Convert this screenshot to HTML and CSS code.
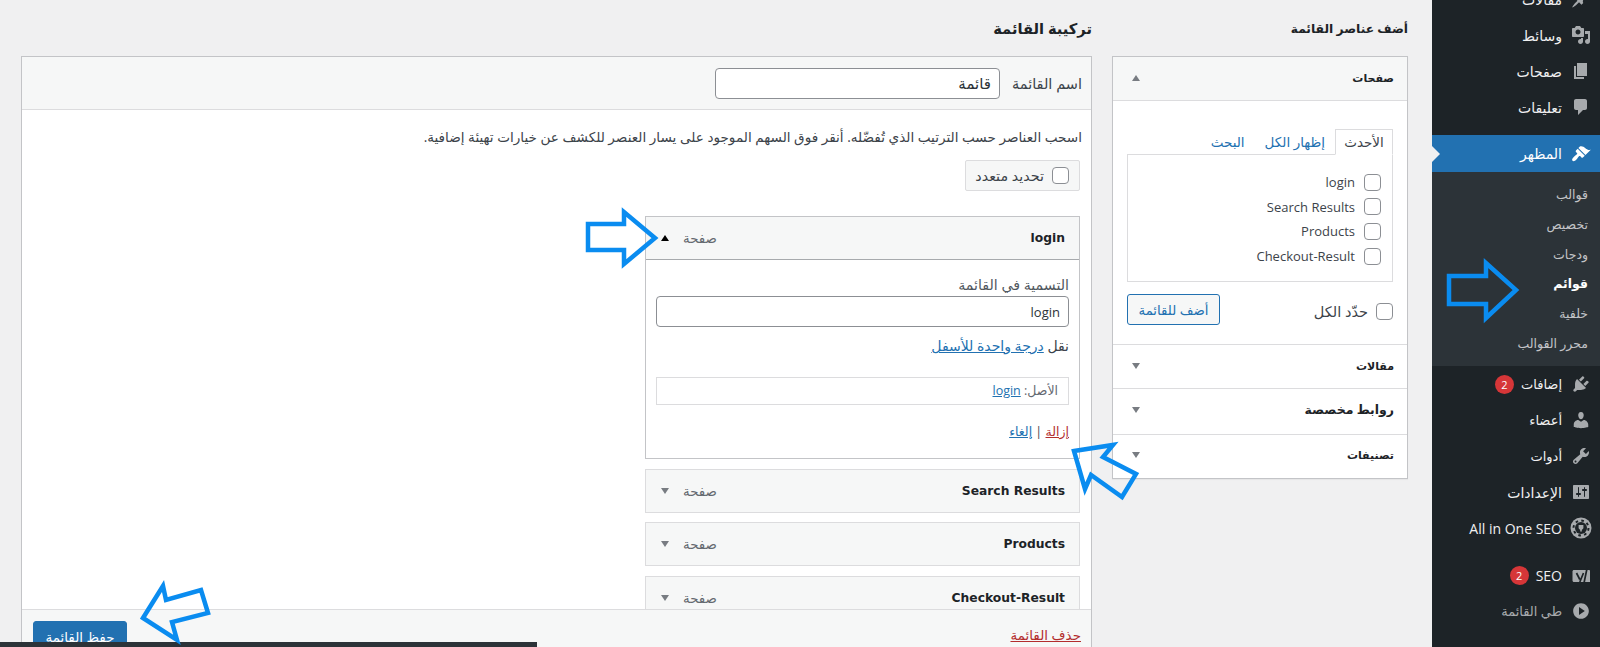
FILE: index.html
```html
<!DOCTYPE html>
<html lang="ar" dir="rtl">
<head>
  <meta charset="UTF-8">
  <meta name="viewport" content="width=device-width, initial-scale=1.0">
  <title>القوائم</title>
  <link rel="stylesheet" href="styles.css">
</head>
<body>
  <div class="page">
    <nav class="sidebar">
      <a class="nav-item"><svg class="nav-icon" viewBox="0 0 20 20"><path d="M10.44 3.02l1.82-1.82 6.36 6.35-1.83 1.82c-1.05-.68-2.48-.57-3.41.36l-.75.75c-.92.93-1.04 2.35-.35 3.41l-1.83 1.82-2.41-2.41-2.8 2.79c-.42.42-3.38 2.71-3.8 2.29s1.86-3.39 2.28-3.81l2.79-2.79L4.1 9.36l1.83-1.82c1.05.69 2.48.57 3.4-.36l.75-.75c.93-.92 1.05-2.35.36-3.41z"/></svg><span>مقالات</span></a>
      <a class="nav-item"><svg class="nav-icon" viewBox="0 0 20 20"><path d="M13 11V4c0-.55-.45-1-1-1h-1.67L9 1H5L3.67 3H2c-.55 0-1 .45-1 1v7c0 .55.45 1 1 1h10c.55 0 1-.45 1-1zM7 4.5c1.38 0 2.5 1.12 2.5 2.5S8.38 9.5 7 9.5 4.5 8.38 4.5 7 5.62 4.5 7 4.5zM14 6h5v10.5c0 1.38-1.12 2.5-2.5 2.5S14 17.88 14 16.5s1.12-2.5 2.5-2.5c.17 0 .34.02.5.05V9h-3V6zm-4 8.05V13h2v3.5c0 1.38-1.12 2.5-2.5 2.5S7 17.88 7 16.5 8.12 14 9.5 14c.17 0 .34.02.5.05z"/></svg><span>وسائط</span></a>
      <a class="nav-item"><svg class="nav-icon" viewBox="0 0 20 20"><path d="M6 15V2h10v13H6zm-1 1h8v2H3V5h2v11z"/></svg><span>صفحات</span></a>
      <a class="nav-item"><svg class="nav-icon" viewBox="0 0 20 20"><path d="M5 2h9c1.1 0 2 .9 2 2v7c0 1.1-.9 2-2 2h-2l-5 5v-5H5c-1.1 0-2-.9-2-2V4c0-1.1.9-2 2-2z"/></svg><span>تعليقات</span></a>
      <a class="nav-item nav-current"><svg class="nav-icon" viewBox="0 0 20 20"><path d="M14.48 11.06L7.41 3.99l1.5-1.5c.5-.56 2.3-.47 3.51.32 1.21.8 1.43 1.28 2.91 2.1 1.18.64 2.45 1.26 4.45.85zm-.71.71L6.7 4.7 4.93 6.47c-.39.39-.39 1.02 0 1.41l1.06 1.06c.39.39.39 1.03 0 1.42-.6.6-1.43 1.11-2.21 1.69-.35.26-.7.53-1.01.84-1.34 1.34-2.28 2.9-1.25 3.93 1.03 1.03 2.59.09 3.93-1.25.31-.31.58-.66.84-1.01.58-.78 1.09-1.61 1.69-2.21.39-.39 1.03-.39 1.42 0l1.06 1.06c.39.39 1.02.39 1.41 0z"/></svg><span>المظهر</span></a>
      <div class="submenu">
        <a>قوالب</a>
        <a>تخصيص</a>
        <a>ودجات</a>
        <a class="sub-current">قوائم</a>
        <a>خلفية</a>
        <a>محرر القوالب</a>
      </div>
      <a class="nav-item nav-tight"><svg class="nav-icon" viewBox="0 0 20 20"><path d="M13.11 4.36L9.87 7.6 8 5.73l3.24-3.24c.35-.34 1.05-.2 1.56.32.52.51.66 1.21.31 1.55zm-8 1.77l.91-1.12 9.01 9.01-1.19.84c-.71.71-2.63 1.16-3.82 1.16H6.14L4.9 17.26c-.59.59-1.54.59-2.12 0-.59-.58-.59-1.53 0-2.12l1.24-1.24v-3.88c0-1.13.4-3.19 1.09-3.89zm7.26 3.97l3.24-3.24c.34-.35 1.04-.21 1.55.31.52.51.66 1.21.31 1.55l-3.24 3.25z"/></svg><span>إضافات</span><b class="badge">2</b></a>
      <a class="nav-item nav-tight"><svg class="nav-icon" viewBox="0 0 20 20"><path d="M10 9.25c-2.27 0-2.73-3.44-2.73-3.44C7 4.02 7.82 2 9.97 2c2.16 0 2.98 2.02 2.71 3.81 0 0-.41 3.44-2.68 3.44zm0 2.57L12.72 10c2.39 0 4.52 2.33 4.52 4.53v2.49s-3.65 1.13-7.24 1.13c-3.65 0-7.24-1.13-7.24-1.13v-2.49c0-2.25 1.94-4.48 4.47-4.48z"/></svg><span>أعضاء</span></a>
      <a class="nav-item nav-tight"><svg class="nav-icon" viewBox="0 0 20 20"><path d="M16.68 9.77c-1.34 1.34-3.3 1.67-4.95.99l-5.41 6.52c-.99.99-2.59.99-3.58 0s-.99-2.59 0-3.57l6.52-5.42c-.68-1.65-.35-3.61.99-4.95 1.28-1.28 3.12-1.62 4.72-1.06l-2.89 2.89 2.82 2.82 2.86-2.87c.53 1.58.18 3.39-1.08 4.65zM3.81 16.21c.4.39 1.04.39 1.43 0 .4-.4.4-1.04 0-1.43-.39-.4-1.03-.4-1.43 0-.39.39-.39 1.03 0 1.43z"/></svg><span>أدوات</span></a>
      <a class="nav-item"><svg class="nav-icon" viewBox="0 0 20 20"><path d="M18 16V4c0-.55-.45-1-1-1H3c-.55 0-1 .45-1 1v12c0 .55.45 1 1 1h14c.55 0 1-.45 1-1zM8 11h1c.55 0 1 .45 1 1s-.45 1-1 1H8v1.5c0 .28-.22.5-.5.5s-.5-.22-.5-.5V13H6c-.55 0-1-.45-1-1s.45-1 1-1h1V5.5c0-.28.22-.5.5-.5s.5.22.5.5V11zm5-2h-1c-.55 0-1-.45-1-1s.45-1 1-1h1V5.5c0-.28.22-.5.5-.5s.5.22.5.5V7h1c.55 0 1 .45 1 1s-.45 1-1 1h-1v5.5c0 .28-.22.5-.5.5s-.5-.22-.5-.5V9z"/></svg><span>الإعدادات</span></a>
      <a class="nav-item"><svg class="nav-icon icon-large" viewBox="0 0 22 22"><circle cx="11" cy="11" r="10.5"/><circle cx="11" cy="11" r="6" fill="#1d2327"/><circle cx="11" cy="11" r="7.5" fill="none" stroke="#1d2327" stroke-width="2" stroke-dasharray="2.6 3.3"/><path d="M8.6 8h4.8v3.2L11.800 13v1.600h-1.600V13L8.600 11.200z"/></svg><span class="nav-latin">All in One SEO</span></a>
      <a class="nav-item nav-seo"><svg class="nav-icon" viewBox="0 0 20 20"><path d="M3 5h15c.4 0 1 .4 1 1v11H3c-.9 0-1.500-.6-1.500-1.500v-9C1.500 5.600 2.100 5 3 5z"/><path d="M5.500 8l3.300 6.500M12.500 8l-3.700 9M16.500 1l-3.500 17" stroke="#1d2327" stroke-width="1.700" fill="none"/></svg><span class="nav-latin">SEO</span><b class="badge">2</b></a>
      <a class="nav-item nav-collapse"><svg class="nav-icon flip" viewBox="0 0 20 20"><path d="M10 2.160c4.330 0 7.840 3.510 7.840 7.840s-3.510 7.840-7.840 7.840S2.160 14.330 2.160 10 5.710 2.160 10 2.160zm2 11.720V6.120L6.180 9.970z"/></svg><span>طي القائمة</span></a>
    </nav>

    <main class="content">
      <section class="add-col">
        <h2 class="col-title">أضف عناصر القائمة</h2>
        <div class="accordion">
          <div class="acc-head acc-open"><span>صفحات</span><i class="tri tri-up"></i></div>
          <div class="acc-body">
            <div class="tabs">
              <span class="tab tab-active">الأحدث</span>
              <a class="tab">إظهار الكل</a>
              <a class="tab">البحث</a>
            </div>
            <div class="tab-panel">
              <label class="check-row"><input type="checkbox"><span>login</span></label>
              <label class="check-row"><input type="checkbox"><span>Search Results</span></label>
              <label class="check-row"><input type="checkbox"><span>Products</span></label>
              <label class="check-row"><input type="checkbox"><span>Checkout-Result</span></label>
            </div>
            <div class="add-actions">
              <label class="select-all"><input type="checkbox"><span>حدّد الكل</span></label>
              <button class="btn-secondary">أضف للقائمة</button>
            </div>
          </div>
          <div class="acc-head"><span>مقالات</span><i class="tri"></i></div>
          <div class="acc-head acc-tall"><span>روابط مخصصة</span><i class="tri"></i></div>
          <div class="acc-head acc-last"><span>تصنيفات</span><i class="tri"></i></div>
        </div>
      </section>

      <section class="menu-col">
        <h2 class="col-title title-large">تركيبة القائمة</h2>
        <div class="menu-box">
          <div class="menu-header">
            <label class="name-label">اسم القائمة</label>
            <input class="text-input name-input" type="text" value="قائمة">
          </div>
          <div class="menu-body">
            <p class="hint">اسحب العناصر حسب الترتيب الذي تُفضّله. أنقر فوق السهم الموجود على يسار العنصر للكشف عن خيارات تهيئة إضافية.</p>
            <label class="bulk"><input type="checkbox"><span>تحديد متعدد</span></label>

            <div class="item item-open">
              <div class="item-head"><span class="item-title">login</span><span class="item-type">صفحة</span><i class="tri tri-up tri-dark"></i></div>
              <div class="item-body">
                <div class="field-label">التسمية في القائمة</div>
                <input class="text-input item-input" type="text" value="login" dir="rtl">
                <div class="move-row">نقل <a>درجة واحدة للأسفل</a></div>
                <div class="origin">الأصل: <a>login</a></div>
                <div class="item-links"><a class="danger">إزالة</a> | <a>إلغاء</a></div>
              </div>
            </div>
            <div class="item">
              <div class="item-head"><span class="item-title">Search Results</span><span class="item-type">صفحة</span><i class="tri"></i></div>
            </div>
            <div class="item">
              <div class="item-head"><span class="item-title">Products</span><span class="item-type">صفحة</span><i class="tri"></i></div>
            </div>
            <div class="item">
              <div class="item-head"><span class="item-title">Checkout-Result</span><span class="item-type">صفحة</span><i class="tri"></i></div>
            </div>
          </div>
          <div class="menu-footer">
            <a class="danger">حذف القائمة</a>
            <button class="btn-primary">حفظ القائمة</button>
          </div>
        </div>
      </section>
    </main>

    <div class="bottom-bar"></div>

    <!-- annotation arrows drawn on top of the screenshot -->
    <svg class="arrows" viewBox="0 0 1600 647">
      <path d="M588 224H624V212L655 238L624 264V250H588Z"/>
      <path d="M1449 276H1486V263L1516 290L1486 318V304H1449Z"/>
      <path d="M1074 451L1113 445L1103 457L1136 474L1122 497L1091 475L1085 489Z"/>
      <path d="M143 618L163 586L166 600L201 590L208 613L172 622L177 640Z"/>
    </svg>
  </div>
</body>
</html>
```

FILE: styles.css
```css
* {
  box-sizing: border-box;
}
html, body {
  margin: 0;
  padding: 0;
  height: 100%;
  overflow: hidden;
}
body {
  font-family: "Open Sans", "DejaVu Sans", sans-serif;
  font-size: 13.5px;
  color: #3c434a;
  background: #f0f0f1;
}
a {
  color: #2271b1;
  text-decoration: none;
}
p {
  margin: 0;
}
.page {
  position: relative;
  display: flex;
  width: 1600px;
  height: 647px;
  overflow: hidden;
}

/* sidebar */
.sidebar {
  width: 168px;
  flex-shrink: 0;
  height: 700px;
  margin-top: -19px;
  background: #1d2327;
  color: #f0f0f1;
}
.nav-item {
  display: flex;
  align-items: center;
  gap: 9px;
  height: 36px;
  padding-right: 9px;
  font-size: 14px;
  color: #f0f0f1;
}
.nav-tight {
  font-size: 13px;
}
.nav-icon {
  width: 20px;
  height: 20px;
  flex-shrink: 0;
  fill: #a7aaad;
}
.icon-large {
  width: 22px;
  height: 22px;
  margin-left: -1px;
  margin-right: -1px;
}
.flip {
  transform: scaleX(-1);
}
.nav-latin {
  font-family: "Open Sans", sans-serif;
  font-size: 14px;
}
.nav-current {
  position: relative;
  height: 37px;
  margin-top: 10px;
  background: #2271b1;
  color: #fff;
}
.nav-current .nav-icon {
  fill: #fff;
}
.nav-current::after {
  content: "";
  position: absolute;
  left: 0;
  top: 11px;
  border-top: 8px solid transparent;
  border-bottom: 8px solid transparent;
  border-left: 8px solid #f0f0f1;
}
.submenu {
  display: flex;
  flex-direction: column;
  height: 194px;
  padding: 8px 0 6px;
  background: #2c3338;
  font-size: 12.5px;
}
.submenu a {
  height: 29.8px;
  line-height: 30px;
  padding-right: 12px;
  color: #c3c4c7;
}
.submenu .sub-current {
  color: #fff;
  font-weight: bold;
}
.badge {
  width: 19px;
  height: 19px;
  margin-right: -2px;
  border-radius: 50%;
  background: #d63638;
  color: #fff;
  font-family: "Open Sans", sans-serif;
  font-size: 11px;
  font-weight: 400;
  line-height: 19px;
  text-align: center;
}
.nav-seo {
  margin-top: 11px;
}
.nav-collapse span {
  font-size: 13px;
  color: #a7aaad;
}

/* content columns */
.content {
  flex: 1;
  display: flex;
  gap: 20px;
  padding-right: 24px;
  padding-left: 21px;
}
.add-col {
  width: 296px;
  flex-shrink: 0;
}
.menu-col {
  flex: 1;
}
.col-title {
  margin: 0;
  height: 56px;
  line-height: 57px;
  font-size: 12.3px;
  font-weight: 600;
  color: #1d2327;
}
.title-large {
  font-size: 14.7px;
}

/* left accordion */
.accordion {
  background: #fff;
  border: 1px solid #c3c4c7;
  box-shadow: 0 1px 1px rgba(0, 0, 0, .04);
}
.acc-head {
  display: flex;
  align-items: center;
  justify-content: space-between;
  height: 44px;
  padding: 0 13px 2px 19px;
  border-top: 1px solid #dcdcde;
  font-size: 11px;
  font-weight: bold;
  color: #1d2327;
}
.acc-open {
  border-top: 0;
  border-bottom: 1px solid #dcdcde;
  background: #f6f7f7;
}
.acc-tall {
  height: 46px;
  padding-bottom: 4px;
  font-size: 12.5px;
}
.acc-last {
  padding-bottom: 4px;
}
.acc-body {
  height: 243px;
  padding: 28px 14px 0;
}
.tabs {
  display: flex;
  align-items: stretch;
  height: 26px;
  margin-bottom: -1px;
}
.tab {
  display: flex;
  align-items: center;
  padding: 0 10px;
  color: #2271b1;
}
.tab-active {
  position: relative;
  z-index: 1;
  justify-content: center;
  width: 58px;
  padding: 0;
  background: #fff;
  color: #3c434a;
  border: 1px solid #dcdcde;
  border-bottom-color: #fff;
}
.tab-panel {
  height: 128px;
  padding: 15px 11px 0;
  border: 1px solid #dcdcde;
}
.check-row {
  display: flex;
  align-items: center;
  gap: 9px;
  height: 24.6px;
  font-size: 13px;
}
input[type="checkbox"] {
  appearance: none;
  width: 17px;
  height: 17px;
  margin: 0;
  flex-shrink: 0;
  background: #fff;
  border: 1px solid #8c8f94;
  border-radius: 4px;
}
.add-actions {
  display: flex;
  align-items: center;
  justify-content: space-between;
  margin-top: 12px;
}
.select-all {
  display: flex;
  align-items: center;
  gap: 8px;
  margin-top: 4px;
  font-size: 14.5px;
}
.btn-secondary {
  width: 93px;
  height: 31px;
  padding: 0;
  font-family: inherit;
  font-size: 13.3px;
  color: #2271b1;
  background: #f6f7f7;
  border: 1px solid #2271b1;
  border-radius: 3px;
}

/* right panel */
.menu-box {
  display: flex;
  flex-direction: column;
  background: #fff;
  border: 1px solid #c3c4c7;
  border-bottom: 0;
}
.menu-header {
  display: flex;
  align-items: center;
  gap: 12px;
  height: 53px;
  padding: 0 9px 0 11px;
  background: #f6f7f7;
  border-bottom: 1px solid #dcdcde;
}
.name-label {
  font-size: 14.5px;
}
.text-input {
  height: 31px;
  padding: 0 8px;
  font-family: inherit;
  font-size: 13px;
  color: #2c3338;
  background: #fff;
  border: 1px solid #8c8f94;
  border-radius: 4px;
}
.name-input {
  width: 285px;
  font-size: 15px;
}
.menu-body {
  height: 499px;
  padding: 17px 11px 0;
  overflow: hidden;
}
.hint {
  height: 20px;
  margin-right: -2px;
  line-height: 20px;
  font-size: 13.6px;
  white-space: nowrap;
}
.bulk {
  display: flex;
  align-items: center;
  gap: 8px;
  width: 115px;
  height: 31px;
  margin-top: 13px;
  padding: 0 10px;
  font-size: 14.3px;
  white-space: nowrap;
  background: #f6f7f7;
  border: 1px solid #dcdcde;
  border-radius: 2px;
}
.item {
  width: 435px;
  margin-top: 9.5px;
  background: #f6f7f7;
  border: 1px solid #dcdcde;
}
.item-open {
  margin-top: 25px;
  background: #fff;
  border-color: #c3c4c7;
}
.item-head {
  display: flex;
  align-items: center;
  height: 42px;
  padding: 0 14px 0 15px;
  background: #f6f7f7;
}
.item-open .item-head {
  height: 43px;
  border-bottom: 1px solid #a7aaad;
}
.item-title {
  flex: 1;
  font-family: "DejaVu Sans", sans-serif;
  font-size: 12.3px;
  font-weight: bold;
  color: #1d2327;
}
.item-type {
  margin-left: 14px;
  font-size: 13.4px;
  color: #646970;
}
.item-body {
  height: 198px;
  padding: 17px 10px 0;
}
.field-label {
  height: 15px;
  line-height: 15px;
  font-size: 14.2px;
  color: #50575e;
}
.item-input {
  display: block;
  width: 100%;
  margin-top: 4px;
}
.move-row {
  height: 18px;
  margin-top: 10px;
  line-height: 18px;
  font-size: 14px;
}
.origin {
  height: 28px;
  margin-top: 22px;
  padding: 0 10px;
  line-height: 26px;
  font-size: 12.5px;
  color: #646970;
  border: 1px solid #dcdcde;
}
.item-links {
  margin-top: 18px;
  line-height: 18px;
  font-size: 12.5px;
}
.move-row a, .origin a, .item-links a, .menu-footer a {
  text-decoration: underline;
}
a.danger {
  color: #b32d2e;
}
.menu-footer {
  display: flex;
  align-items: flex-start;
  justify-content: space-between;
  height: 60px;
  padding: 11px 10px 0 11px;
  background: #f6f7f7;
  border-top: 1px solid #dcdcde;
}
.menu-footer a {
  margin-top: 5px;
}
.btn-primary {
  width: 94px;
  height: 32px;
  padding: 0;
  font-family: inherit;
  font-size: 13.5px;
  color: #fff;
  background: #2271b1;
  border: 1px solid #2271b1;
  border-radius: 3px;
}

/* small triangles */
.tri {
  display: block;
  width: 0;
  height: 0;
  flex-shrink: 0;
  border-left: 4px solid transparent;
  border-right: 4px solid transparent;
  border-top: 6px solid #787c82;
}
.tri-up {
  border-top: 0;
  border-bottom: 6px solid #787c82;
}
.tri-dark {
  border-bottom-color: #000;
}

/* overlays */
.bottom-bar {
  position: absolute;
  left: 0;
  bottom: 0;
  width: 537px;
  height: 5px;
  background: #2c3338;
}
.arrows {
  position: absolute;
  left: 0;
  top: 0;
  width: 1600px;
  height: 647px;
  fill: none;
  stroke: #0a8cf0;
  stroke-width: 4.5;
  pointer-events: none;
}
```
